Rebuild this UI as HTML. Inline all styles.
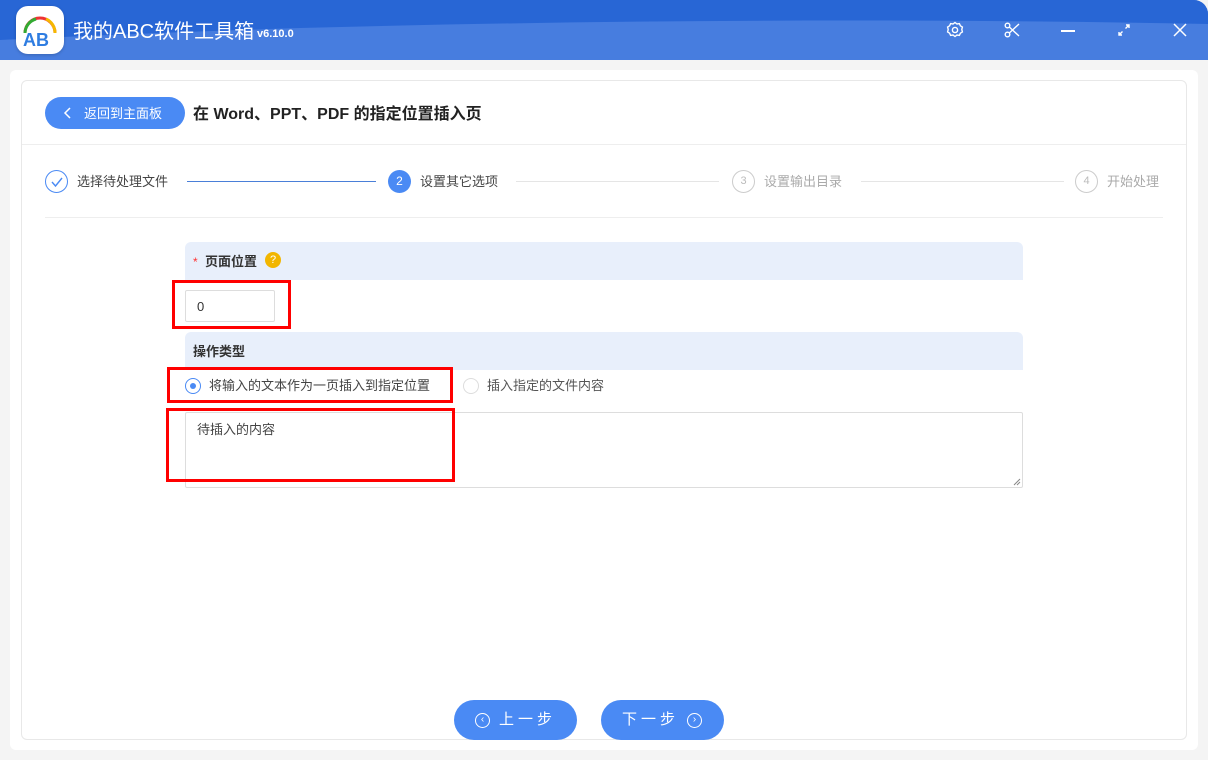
<!DOCTYPE html>
<html><head><meta charset="utf-8"><style>
*{margin:0;padding:0;box-sizing:border-box}
body{width:1208px;height:760px;background:#f4f4f4;font-family:"Liberation Sans","Noto Sans CJK SC",sans-serif;position:relative;overflow:hidden;color:#333}
.top{position:absolute;left:0;top:0;width:1208px;height:60px;background:#477ddf;overflow:hidden;border-radius:0 14px 0 0}
.abs{position:absolute}
.card{position:absolute;left:10px;top:70px;width:1188px;height:680px;background:#fff;border-radius:6px}
.inner{position:absolute;left:21px;top:80px;width:1166px;height:660px;border:1px solid #e8e8e8;border-radius:6px;background:#fff}
.t{position:absolute;white-space:nowrap;line-height:1.2}
</style></head><body>
<div class="top"><svg width="1208" height="60" style="position:absolute;left:0;top:0"><path d="M0 0H1208V24C900 18 600 20 300 28C180 32 80 36 0 40Z" fill="#2866d5"/></svg></div>
<div class="abs" style="left:16px;top:6px;width:48px;height:48px;background:#fff;border-radius:12px;box-shadow:0 1px 3px rgba(0,0,0,.2)">
<svg width="48" height="48" viewBox="0 0 48 48"><path d="M9 27 A15 15 0 0 1 39 27" fill="none" stroke="#e33" stroke-width="3"/><path d="M9 27 A15 15 0 0 1 20 13" fill="none" stroke="#3a3" stroke-width="3"/><path d="M30 13 A15 15 0 0 1 39 27" fill="none" stroke="#f5b800" stroke-width="3"/><text x="7" y="40" font-size="18" font-weight="bold" fill="#2f7de1" font-family="Liberation Sans">AB</text></svg></div>
<div class="t" style="left:73px;top:20px;color:#fff;font-size:20px">我的ABC软件工具箱</div>
<div class="t" style="left:257px;top:28px;color:#fff;font-size:11px;font-weight:bold">v6.10.0</div>
<svg class="abs" style="left:946px;top:21px" width="18" height="18" viewBox="0 0 18 18" fill="none" stroke="#fff" stroke-width="1.4"><path d="M9 1.5l2 1.5 2.4-.4 1 2.2 2 1.3-.6 2.4.6 2.4-2 1.3-1 2.2-2.4-.4-2 1.5-2-1.5-2.4.4-1-2.2-2-1.3.6-2.4-.6-2.4 2-1.3 1-2.2 2.4.4z"/><circle cx="9" cy="9" r="2.6"/></svg>
<svg class="abs" style="left:1004px;top:22px" width="16" height="16" viewBox="0 0 16 16" fill="none" stroke="#fff" stroke-width="1.4"><circle cx="3.5" cy="3.5" r="2.3"/><circle cx="3.5" cy="12.5" r="2.3"/><path d="M5.3 5L15 14M5.3 11L15 2"/></svg>
<div class="abs" style="left:1061px;top:30px;width:14px;height:1.6px;background:#fff"></div>
<svg class="abs" style="left:1117px;top:23px" width="14" height="14" viewBox="0 0 14 14" fill="none" stroke="#fff" stroke-width="1.4"><path d="M2 12L5.5 8.5M8.5 5.5L12 2M9 2h3v3M2 9v3h3"/></svg>
<svg class="abs" style="left:1173px;top:23px" width="14" height="14" viewBox="0 0 14 14" stroke="#fff" stroke-width="1.5"><path d="M1 1L13 13M13 1L1 13"/></svg>
<div class="card"></div>
<div class="inner"></div>
<div class="abs" style="left:45px;top:97px;width:140px;height:32px;background:#4a8af4;border-radius:16px"></div>
<svg class="abs" style="left:63px;top:106px" width="10" height="14" viewBox="0 0 10 14" fill="none" stroke="#fff" stroke-width="1.5"><path d="M7 2L2 7l5 5"/></svg>
<div class="t" style="left:84px;top:106px;color:#fff;font-size:13px">返回到主面板</div>
<div class="t" style="left:193px;top:105px;font-size:16px;font-weight:bold;color:#222">在 Word、PPT、PDF 的指定位置插入页</div>
<div class="abs" style="left:22px;top:144px;width:1164px;height:1px;background:#eee"></div>
<div class="abs" style="left:45px;top:170px;width:23px;height:23px;border:1px solid #4a8af4;border-radius:50%"></div>
<svg class="abs" style="left:50px;top:176px" width="14" height="12" viewBox="0 0 14 12" fill="none" stroke="#4a8af4" stroke-width="1.4"><path d="M2 6l3.5 4L12 2"/></svg>
<div class="t" style="left:77px;top:174px;font-size:13px;color:#444">选择待处理文件</div>
<div class="abs" style="left:187px;top:181px;width:189px;height:1px;background:#4a7fd8"></div>
<div class="abs" style="left:388px;top:170px;width:23px;height:23px;background:#4a8af4;border-radius:50%;color:#fff;font-size:12px;text-align:center;line-height:23px">2</div>
<div class="t" style="left:420px;top:174px;font-size:13px;color:#444">设置其它选项</div>
<div class="abs" style="left:516px;top:181px;width:203px;height:1px;background:#e5e5e5"></div>
<div class="abs" style="left:732px;top:170px;width:23px;height:23px;border:1px solid #ccc;border-radius:50%;color:#bbb;font-size:11px;text-align:center;line-height:21px">3</div>
<div class="t" style="left:764px;top:174px;font-size:13px;color:#aaa">设置输出目录</div>
<div class="abs" style="left:861px;top:181px;width:203px;height:1px;background:#e5e5e5"></div>
<div class="abs" style="left:1075px;top:170px;width:23px;height:23px;border:1px solid #ccc;border-radius:50%;color:#bbb;font-size:11px;text-align:center;line-height:21px">4</div>
<div class="t" style="left:1107px;top:174px;font-size:13px;color:#aaa">开始处理</div>
<div class="abs" style="left:45px;top:217px;width:1118px;height:1px;background:#eee"></div>
<div class="abs" style="left:185px;top:242px;width:838px;height:38px;background:#e8effb;border-radius:6px 6px 0 0"></div>
<div class="t" style="left:193px;top:255px;font-size:12px;color:#f33">*</div>
<div class="t" style="left:205px;top:254px;font-size:13px;font-weight:bold;color:#333">页面位置</div>
<div class="abs" style="left:265px;top:252px;width:16px;height:16px;border-radius:50%;background:#f2b600;color:#fff;font-size:11px;text-align:center;line-height:16px">?</div>
<div class="abs" style="left:185px;top:290px;width:90px;height:32px;border:1px solid #ddd;border-radius:2px"></div>
<div class="t" style="left:197px;top:299px;font-size:13px;color:#333">0</div>
<div class="abs" style="left:172px;top:280px;width:119px;height:49px;border:3px solid #f00"></div>
<div class="abs" style="left:185px;top:332px;width:838px;height:38px;background:#e8effb;border-radius:6px 6px 0 0"></div>
<div class="t" style="left:193px;top:344px;font-size:13px;font-weight:bold;color:#333">操作类型</div>
<div class="abs" style="left:185px;top:378px;width:16px;height:16px;border:1px solid #4a8af4;border-radius:50%"></div>
<div class="abs" style="left:190px;top:383px;width:6px;height:6px;background:#4a8af4;border-radius:50%"></div>
<div class="t" style="left:209px;top:378px;font-size:13px;color:#444">将输入的文本作为一页插入到指定位置</div>
<div class="abs" style="left:463px;top:378px;width:16px;height:16px;border:1px solid #ddd;border-radius:50%"></div>
<div class="t" style="left:487px;top:378px;font-size:13px;color:#555">插入指定的文件内容</div>
<div class="abs" style="left:167px;top:367px;width:286px;height:36px;border:3px solid #f00"></div>
<div class="abs" style="left:185px;top:412px;width:838px;height:76px;border:1px solid #ddd;border-radius:2px"></div>
<svg class="abs" style="left:1013px;top:478px" width="8" height="8" stroke="#888"><path d="M1 7L7 1M4 7L7 4"/></svg>
<div class="t" style="left:197px;top:422px;font-size:13px;color:#444">待插入的内容</div>
<div class="abs" style="left:166px;top:408px;width:289px;height:74px;border:3px solid #f00"></div>
<div class="abs" style="left:454px;top:700px;width:123px;height:40px;background:#4a8af4;border-radius:20px"></div>
<div class="abs" style="left:475px;top:713px;width:15px;height:15px;border:1.3px solid #fff;border-radius:50%;color:#fff;font-size:10px;text-align:center;line-height:12px">‹</div>
<div class="t" style="left:499px;top:711px;color:#fff;font-size:15px;letter-spacing:4px">上一步</div>
<div class="abs" style="left:601px;top:700px;width:123px;height:40px;background:#4a8af4;border-radius:20px"></div>
<div class="t" style="left:622px;top:711px;color:#fff;font-size:15px;letter-spacing:4px">下一步</div>
<div class="abs" style="left:687px;top:713px;width:15px;height:15px;border:1.3px solid #fff;border-radius:50%;color:#fff;font-size:10px;text-align:center;line-height:12px">›</div>
</body></html>
